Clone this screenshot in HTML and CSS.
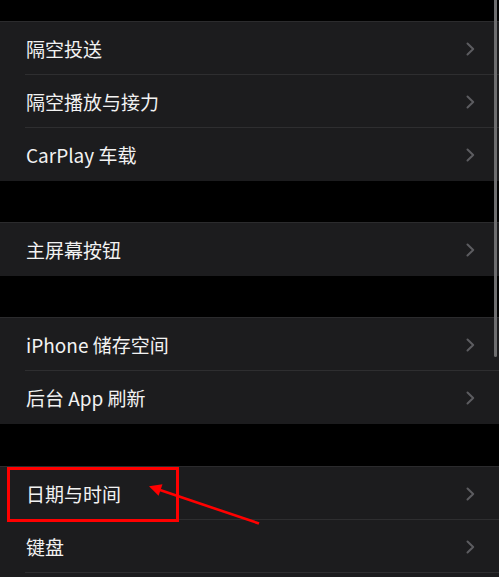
FILE: index.html
```html
<!DOCTYPE html>
<html lang="zh-CN">
<head>
<meta charset="utf-8">
<title>设置</title>
<link rel="stylesheet" href="styles.css">
</head>
<body>
<div class="screen">
  <section class="group group-first">
    <div class="row"><span class="label">隔空投送</span><svg class="chev" viewBox="0 0 9 14" width="9" height="14"><path d="M1.5 1.5 L7.2 7 L1.5 12.5"/></svg></div>
    <div class="row"><span class="label">隔空播放与接力</span><svg class="chev" viewBox="0 0 9 14" width="9" height="14"><path d="M1.5 1.5 L7.2 7 L1.5 12.5"/></svg></div>
    <div class="row"><span class="label">CarPlay 车载</span><svg class="chev" viewBox="0 0 9 14" width="9" height="14"><path d="M1.5 1.5 L7.2 7 L1.5 12.5"/></svg></div>
  </section>
  <section class="group">
    <div class="row"><span class="label">主屏幕按钮</span><svg class="chev" viewBox="0 0 9 14" width="9" height="14"><path d="M1.5 1.5 L7.2 7 L1.5 12.5"/></svg></div>
  </section>
  <section class="group">
    <div class="row"><span class="label">iPhone 储存空间</span><svg class="chev" viewBox="0 0 9 14" width="9" height="14"><path d="M1.5 1.5 L7.2 7 L1.5 12.5"/></svg></div>
    <div class="row"><span class="label">后台 App 刷新</span><svg class="chev" viewBox="0 0 9 14" width="9" height="14"><path d="M1.5 1.5 L7.2 7 L1.5 12.5"/></svg></div>
  </section>
  <section class="group group-last">
    <div class="row"><span class="label">日期与时间</span><svg class="chev" viewBox="0 0 9 14" width="9" height="14"><path d="M1.5 1.5 L7.2 7 L1.5 12.5"/></svg></div>
    <div class="row row-continued"><span class="label">键盘</span><svg class="chev" viewBox="0 0 9 14" width="9" height="14"><path d="M1.5 1.5 L7.2 7 L1.5 12.5"/></svg></div>
    <div class="row-tail"></div>
  </section>

  <div class="scroll-indicator"></div>
  <div class="highlight-box"></div>
  <svg class="arrow" width="499" height="577" viewBox="0 0 499 577">
    <line x1="259" y1="523.5" x2="160" y2="490" />
    <polygon points="149,486.3 162.5,484.2 158.6,495.8" />
  </svg>
</div>
</body>
</html>
```

FILE: styles.css
```css
html, body {
  margin: 0;
  padding: 0;
  background: #000;
  overflow: hidden;
}

.screen {
  position: relative;
  width: 499px;
  height: 577px;
  overflow: hidden;
  font-family: "Noto Sans CJK SC", "Noto Sans", sans-serif;
  color: #f2f2f2;
}

.group {
  margin-top: 41px;
  border-top: 1px solid #2b2b2d;
  background: #1c1c1e;
}

.group-first {
  margin-top: 21px;
}

.group-last {
  margin-top: 42px;
}

.row {
  position: relative;
  height: 53px;
  box-sizing: border-box;
  display: flex;
  align-items: center;
  justify-content: space-between;
  padding: 0 24px 0 26px;
}

.row + .row::before {
  content: "";
  position: absolute;
  left: 25px;
  right: 0;
  top: -1px;
  height: 1px;
  background: #2e2e30;
}

.row-continued::after {
  content: "";
  position: absolute;
  left: 25px;
  right: 0;
  bottom: 0;
  height: 1px;
  background: #2e2e30;
}

.row-tail {
  height: 20px;
}

.label {
  font-size: 19px;
  line-height: 1;
  letter-spacing: 0;
}

.chev {
  display: block;
  fill: none;
  stroke: #5c5c60;
  stroke-width: 2;
  stroke-linecap: round;
  stroke-linejoin: round;
}

.scroll-indicator {
  position: absolute;
  left: 494px;
  top: -10px;
  width: 3px;
  height: 367px;
  border-radius: 2px;
  background: #6e6e70;
}

.highlight-box {
  position: absolute;
  left: 7px;
  top: 467px;
  width: 172px;
  height: 55px;
  box-sizing: border-box;
  border: 3px solid #ff0000;
}

.arrow {
  position: absolute;
  left: 0;
  top: 0;
}

.arrow line {
  stroke: #ff0000;
  stroke-width: 2.6;
}

.arrow polygon {
  fill: #ff0000;
}
```
